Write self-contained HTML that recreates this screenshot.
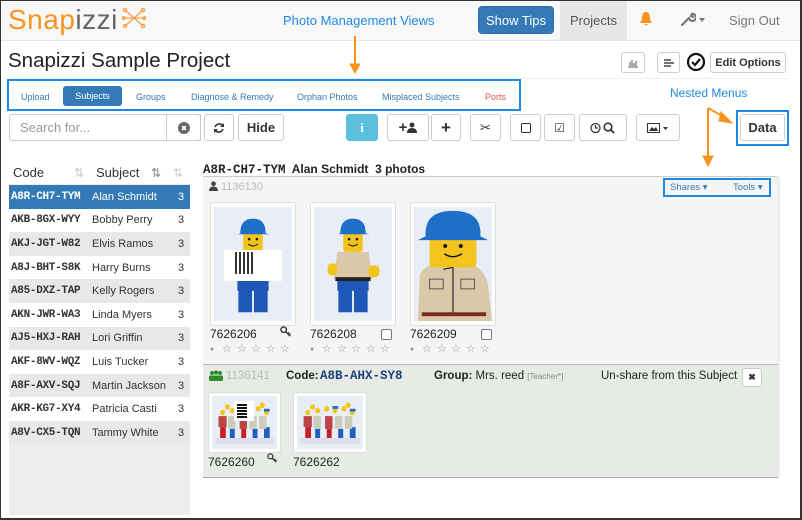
<!DOCTYPE html>
<html><head><meta charset="utf-8"><style>
*{box-sizing:border-box;margin:0;padding:0}
body{width:802px;height:520px;overflow:hidden;background:#fff;font-family:"Liberation Sans",sans-serif;position:relative;color:#333}
.a{position:absolute}
.frame{position:absolute;left:0;top:0;width:802px;height:520px;border:1px solid #333;border-right:2px solid #333;border-bottom:2px solid #333;pointer-events:none;z-index:10}
.btn{position:absolute;border:1px solid #ccc;border-radius:3px;background:#fff;display:flex;align-items:center;justify-content:center;font-size:13px;color:#333}
.mono{font-family:"Liberation Mono",monospace;font-weight:bold}
.row{position:absolute;left:9px;width:181px;height:23.6px;font-size:11px;display:flex;align-items:center}
.row .c{width:80px;padding-left:2px;font-family:"Liberation Mono",monospace;font-weight:bold;font-size:11px;letter-spacing:-0.3px}
.row .s{flex:1;padding-left:3px}
.row .n{width:12px}
.card{position:absolute;background:#fff;border:1px solid #ddd;border-radius:3px;padding:3px}
.lbl{position:absolute;font-size:12px;color:#222}
.st{position:absolute;font-size:11px;color:#999;line-height:10px}
.chk{position:absolute;width:11px;height:11px;border:1px solid #777;border-radius:2px;background:#fff}
</style></head><body>
<svg width="0" height="0" style="position:absolute">
<defs>
<symbol id="lego" viewBox="0 0 80 117">
<rect width="80" height="117" fill="#e8edf6"/>
<rect x="25" y="82" width="14" height="26" fill="#1e57b8"/><rect x="41" y="82" width="14" height="26" fill="#1e57b8"/>
<rect x="24" y="74" width="32" height="12" fill="#1e57b8"/>
<path d="M24 46 L56 46 L60 74 L20 74 Z" fill="#d9c9a9"/>
<rect x="22" y="72" width="36" height="4" fill="#222"/>
<rect x="14" y="58" width="10" height="12" rx="4" fill="#f2c41c"/><rect x="56" y="60" width="11" height="12" rx="4" fill="#f2c41c"/>
<rect x="30" y="26" width="20" height="20" rx="3" fill="#f2c41c"/>
<circle cx="36" cy="33" r="1.3" fill="#111"/><circle cx="44" cy="33" r="1.3" fill="#111"/>
<path d="M35 38 Q40 42 45 38" stroke="#111" fill="none" stroke-width="1"/>
<path d="M27 27 Q27 12 40 12 Q53 12 53 27 L57 28 L25 28 Z" fill="#1f6fc9"/>
</symbol>
<symbol id="big" viewBox="0 0 80 117">
<rect width="80" height="117" fill="#e8edf6"/>
<path d="M6 70 Q10 60 24 58 L56 58 Q72 62 76 80 L80 117 L4 117 Z" fill="#d9c9a9"/>
<rect x="8" y="108" width="66" height="4" fill="#7a2a22"/>
<rect x="16" y="26" width="48" height="36" rx="4" fill="#f2c41c"/>
<circle cx="32" cy="40" r="2" fill="#111"/><circle cx="48" cy="40" r="2" fill="#111"/>
<path d="M31 48 Q40 54 49 48" stroke="#111" fill="none" stroke-width="1.5"/>
<path d="M12 30 Q10 4 40 4 Q70 4 68 30 L76 34 L4 34 Z" fill="#1f6fc9"/>
<path d="M30 64 L40 62 M40 62 L40 108" stroke="#222" stroke-width="1.2"/>
<rect x="16" y="74" width="14" height="10" fill="none" stroke="#555"/><rect x="48" y="74" width="14" height="10" fill="none" stroke="#555"/>
</symbol>
<symbol id="grp" viewBox="0 0 80 58">
<rect width="80" height="58" fill="#e9edf4"/>
<g fill="#c8202a"><rect x="10" y="34" width="7" height="12"/><rect x="36" y="36" width="6" height="10"/></g>
<g fill="#1f5fc0"><rect x="22" y="36" width="6" height="10"/><rect x="64" y="34" width="7" height="12"/><rect x="50" y="36" width="6" height="10"/></g>
<g fill="#f2c41c"><circle cx="13" cy="18" r="3"/><circle cx="25" cy="16" r="3"/><circle cx="36" cy="14" r="3"/><circle cx="46" cy="16" r="3"/><circle cx="57" cy="14" r="3"/><circle cx="67" cy="18" r="3"/><circle cx="19" cy="12" r="3"/><circle cx="62" cy="10" r="3"/></g>
<g fill="#b44"><rect x="8" y="22" width="10" height="12"/><rect x="34" y="22" width="9" height="14"/></g>
<g fill="#ccb"><rect x="20" y="22" width="9" height="14"/><rect x="46" y="22" width="9" height="14"/><rect x="58" y="22" width="9" height="14"/></g>
<g fill="#1f6fc9"><rect x="64" y="14" width="7" height="3"/><rect x="43" y="11" width="7" height="3"/></g>
<rect x="4" y="46" width="72" height="6" fill="#dde"/>
</symbol>
<symbol id="key" viewBox="0 0 12 12"><circle cx="4" cy="4" r="3" stroke="#333" stroke-width="1.5" fill="none"/><path d="M6 6L11 11M8.5 8.5L10 7M10 10L11.5 8.5" stroke="#333" stroke-width="1.5"/></symbol>
</defs></svg>

<!-- navbar -->
<div class="a" style="left:0;top:0;width:802px;height:41px;background:#f8f8f8;border-bottom:1px solid #e7e7e7"></div>
<div class="a" style="left:8px;top:4px;font-size:28px;letter-spacing:0.5px"><span style="color:#f7931e">Snap</span><span style="color:#666">izzi</span></div>
<svg class="a" style="left:122px;top:7px" width="24" height="22" viewBox="0 0 24 22"><g stroke="#f7a24a" stroke-width="1.3" fill="none"><path d="M3 3L21 19M21 3L3 19M1 11H23"/><circle cx="3" cy="3" r="1.6"/><circle cx="21" cy="3" r="1.6"/><circle cx="3" cy="19" r="1.6"/><circle cx="21" cy="19" r="1.6"/><circle cx="1.5" cy="11" r="1.4"/><circle cx="22.5" cy="11" r="1.4"/></g></svg>
<div class="a" style="left:283px;top:13px;font-size:13px;color:#1e88e5">Photo Management Views</div>
<div class="a" style="left:478px;top:6px;width:76px;height:28px;background:#337ab7;border:1px solid #2e6da4;border-radius:4px;color:#fff;font-size:13px;display:flex;align-items:center;justify-content:center">Show Tips</div>
<div class="a" style="left:560px;top:0;width:67px;height:40px;background:#e7e7e7;color:#555;font-size:13px;display:flex;align-items:center;justify-content:center">Projects</div>
<svg class="a" style="left:639px;top:11px" width="14" height="16" viewBox="0 0 14 16"><path d="M7 1C4 1 3 4 3 7C3 10 1 11 1 12H13C13 11 11 10 11 7C11 4 10 1 7 1ZM5 13Q7 16 9 13Z" fill="#f7931e"/></svg>
<svg class="a" style="left:680px;top:12px" width="16" height="15" viewBox="0 0 16 15"><path d="M2 13L9 6M9 6A3.5 3.5 0 1 0 12 2L11 4L13 5" stroke="#777" stroke-width="2.2" fill="none" stroke-linecap="round"/></svg>
<div class="a" style="left:699px;top:18px;border:3px solid transparent;border-top:4px solid #777"></div>
<div class="a" style="left:729px;top:13px;font-size:13px;color:#777">Sign Out</div>

<!-- title -->
<div class="a" style="left:8px;top:49px;font-size:20.5px;color:#222">Snapizzi Sample Project</div>
<div class="btn" style="left:621px;top:52px;width:24px;height:21px"><svg width="12" height="10"><path d="M1 9H11M3 8V4M5 8V2M7 8V5M9 8V3" stroke="#555" stroke-width="1"/></svg></div>
<div class="btn" style="left:657px;top:52px;width:23px;height:21px"><svg width="12" height="10"><path d="M1 2H8M1 5H11M1 8H8" stroke="#444" stroke-width="1.6"/></svg></div>
<svg class="a" style="left:686px;top:52px" width="20" height="20" viewBox="0 0 20 20"><circle cx="10" cy="10" r="8" stroke="#111" stroke-width="2.2" fill="none"/><path d="M6 10L9 13L14 7" stroke="#111" stroke-width="2.2" fill="none"/></svg>
<div class="btn" style="left:710px;top:52px;width:76px;height:21px;font-size:11px;font-weight:bold">Edit Options</div>
<div class="a" style="left:8px;top:78px;width:780px;height:1px;background:#eee"></div>

<!-- tabs -->
<div class="a" style="left:7px;top:79px;width:514px;height:32px;border:2px solid #1e88e5"></div>
<div class="a" style="left:21px;top:92px;font-size:9px;color:#337ab7">Upload</div>
<div class="a" style="left:63px;top:86px;width:59px;height:20px;background:#337ab7;border-radius:3px;color:#fff;font-size:9px;display:flex;align-items:center;justify-content:center">Subjects</div>
<div class="a" style="left:136px;top:92px;font-size:9px;color:#337ab7">Groups</div>
<div class="a" style="left:191px;top:92px;font-size:9px;color:#337ab7">Diagnose &amp; Remedy</div>
<div class="a" style="left:297px;top:92px;font-size:9px;color:#337ab7">Orphan Photos</div>
<div class="a" style="left:382px;top:92px;font-size:9px;color:#337ab7">Misplaced Subjects</div>
<div class="a" style="left:485px;top:92px;font-size:9px;color:#d9534f">Ports</div>
<div class="a" style="left:670px;top:86px;font-size:12px;color:#1e88e5">Nested Menus</div>

<!-- arrows -->
<svg class="a" style="left:0;top:0" width="802" height="180"><g fill="#f7931e" stroke="#f7931e">
<path d="M355 36V66" stroke-width="2"/><path d="M350 64L355 73L360 64Z"/>
<path d="M708 108V158" stroke-width="2"/><path d="M703 156L708 166L713 156Z"/>
<path d="M708 108L726 118" stroke-width="2"/><path d="M721 112L732 123L719 121Z"/>
</g></svg>

<!-- toolbar -->
<div class="btn" style="left:9px;top:114px;width:192px;height:27px;justify-content:flex-start;padding-left:10px;color:#999;font-size:13px;border-radius:3px 0 0 3px">Search for...</div>
<div class="btn" style="left:166px;top:114px;width:35px;height:27px;border-radius:0 3px 3px 0"><svg width="12" height="12"><circle cx="6" cy="6" r="6" fill="#666"/><path d="M4 4L8 8M8 4L4 8" stroke="#fff" stroke-width="1.6"/></svg></div>
<div class="btn" style="left:204px;top:114px;width:30px;height:27px"><svg width="12" height="12" viewBox="0 0 12 12"><path d="M10 4A4.5 4.5 0 0 0 2 5M2 8A4.5 4.5 0 0 0 10 7" stroke="#333" stroke-width="1.6" fill="none"/><path d="M11 1V5H7ZM1 11V7H5Z" fill="#333"/></svg></div>
<div class="btn" style="left:238px;top:114px;width:46px;height:27px;font-weight:bold">Hide</div>
<div class="a" style="left:346px;top:114px;width:32px;height:27px;background:#5bc0de;border-radius:3px;color:#fff;font-weight:bold;font-size:13px;display:flex;align-items:center;justify-content:center;font-family:'Liberation Serif',serif">i</div>
<div class="btn" style="left:387px;top:114px;width:42px;height:27px;font-weight:bold;font-size:15px">+<svg width="10" height="11" viewBox="0 0 10 11"><circle cx="5" cy="3" r="2.5" fill="#333"/><path d="M0 11Q0 6 5 6Q10 6 10 11Z" fill="#333"/></svg></div>
<div class="btn" style="left:431px;top:114px;width:30px;height:27px;font-weight:bold;font-size:17px">+</div>
<div class="btn" style="left:470px;top:114px;width:31px;height:27px;font-size:13px">✂</div>
<div class="btn" style="left:510px;top:114px;width:31px;height:27px"><div style="width:10px;height:10px;border:1.3px solid #333;border-radius:2px"></div></div>
<div class="btn" style="left:544px;top:114px;width:31px;height:27px;font-size:12px">☑</div>
<div class="btn" style="left:579px;top:114px;width:48px;height:27px"><svg width="26" height="12" viewBox="0 0 26 12"><circle cx="5.5" cy="6" r="4.5" stroke="#333" stroke-width="1.3" fill="none"/><path d="M5.5 3V6H8" stroke="#333" stroke-width="1.2" fill="none"/><circle cx="18" cy="5" r="3.8" stroke="#333" stroke-width="1.6" fill="none"/><path d="M20.5 7.5L24 11" stroke="#333" stroke-width="1.8"/></svg></div>
<div class="btn" style="left:636px;top:114px;width:44px;height:27px"><svg width="22" height="10" viewBox="0 0 22 10"><rect x="0.5" y="0.5" width="12" height="9" fill="none" stroke="#333"/><path d="M2 8L5 4L7 6L9 4L11 8Z" fill="#333"/><path d="M16 4H21L18.5 7Z" fill="#333"/></svg></div>
<div class="a" style="left:736px;top:110px;width:53px;height:36px;border:2px solid #1e88e5"></div>
<div class="btn" style="left:740px;top:114px;width:45px;height:27px;font-weight:bold">Data</div>

<!-- left table -->
<div class="a" style="left:13px;top:165px;font-size:13px">Code</div>
<div class="a" style="left:74px;top:166px;font-size:12px;color:#ccc">⇅</div>
<div class="a" style="left:96px;top:165px;font-size:13px">Subject</div>
<div class="a" style="left:151px;top:166px;font-size:12px;color:#888">⇅</div>
<div class="a" style="left:173px;top:166px;font-size:12px;color:#ccc">⇅</div>
<div class="a" style="left:9px;top:184px;width:181px;height:331px;background:#ececec"></div>
<div class="row" style="top:185px;background:#337ab7;color:#fff"><span class="c">A8R-CH7-TYM</span><span class="s">Alan Schmidt</span><span class="n">3</span></div>
<div class="row" style="top:208.6px;background:#fff"><span class="c">AKB-8GX-WYY</span><span class="s">Bobby Perry</span><span class="n">3</span></div>
<div class="row" style="top:232.2px;background:#e8e8e8"><span class="c">AKJ-JGT-W82</span><span class="s">Elvis Ramos</span><span class="n">3</span></div>
<div class="row" style="top:255.8px;background:#fff"><span class="c">A8J-BHT-S8K</span><span class="s">Harry Burns</span><span class="n">3</span></div>
<div class="row" style="top:279.4px;background:#e8e8e8"><span class="c">A85-DXZ-TAP</span><span class="s">Kelly Rogers</span><span class="n">3</span></div>
<div class="row" style="top:303px;background:#fff"><span class="c">AKN-JWR-WA3</span><span class="s">Linda Myers</span><span class="n">3</span></div>
<div class="row" style="top:326.6px;background:#e8e8e8"><span class="c">AJ5-HXJ-RAH</span><span class="s">Lori Griffin</span><span class="n">3</span></div>
<div class="row" style="top:350.2px;background:#fff"><span class="c">AKF-8WV-WQZ</span><span class="s">Luis Tucker</span><span class="n">3</span></div>
<div class="row" style="top:373.8px;background:#e8e8e8"><span class="c">A8F-AXV-SQJ</span><span class="s">Martin Jackson</span><span class="n">3</span></div>
<div class="row" style="top:397.4px;background:#fff"><span class="c">AKR-KG7-XY4</span><span class="s">Patricia Casti</span><span class="n">3</span></div>
<div class="row" style="top:421px;background:#e8e8e8"><span class="c">A8V-CX5-TQN</span><span class="s">Tammy White</span><span class="n">3</span></div>

<!-- main panel -->
<div class="a" style="left:203px;top:162px;font-size:12px;font-weight:bold;color:#222"><span class="mono" style="font-size:12.5px">A8R-CH7-TYM</span>&nbsp; Alan Schmidt&nbsp; 3 photos</div>
<div class="a" style="left:203px;top:176px;width:575px;height:189px;background:#f5f5f5;border-top:1px solid #ccc"></div>
<div class="a" style="left:777px;top:176px;width:3px;height:302px;background:#eee"></div>
<svg class="a" style="left:209px;top:181px" width="9" height="10" viewBox="0 0 10 11"><circle cx="5" cy="3" r="2.6" fill="#444"/><path d="M0 11Q0 6 5 6Q10 6 10 11Z" fill="#444"/></svg>
<div class="a" style="left:221px;top:181px;font-size:11px;color:#bbb">1136130</div>
<div class="a" style="left:663px;top:178px;width:108px;height:19px;border:2px solid #1e88e5"></div>
<div class="a" style="left:670px;top:182px;font-size:9.5px;color:#337ab7">Shares ▾</div>
<div class="a" style="left:733px;top:182px;font-size:9.5px;color:#337ab7">Tools ▾</div>

<div class="card" style="left:210px;top:202px;width:86px;height:124px"><svg width="78" height="116"><use href="#lego"/></svg></div>
<div class="a" style="left:224px;top:250px;width:58px;height:31px;background:#fff"></div>
<div class="a" style="left:235px;top:252px;width:19px;height:22px;background:repeating-linear-gradient(90deg,#111 0 2px,#fff 2px 4px),#111;opacity:.85"></div>
<div class="card" style="left:310px;top:202px;width:86px;height:124px"><svg width="78" height="116"><use href="#lego"/></svg></div>
<div class="card" style="left:410px;top:202px;width:86px;height:124px"><svg width="78" height="116"><use href="#big"/></svg></div>

<div class="lbl" style="left:210px;top:327px">7626206</div>
<svg class="a" style="left:280px;top:326px" width="11" height="11"><use href="#key"/></svg>
<div class="lbl" style="left:310px;top:327px">7626208</div>
<div class="chk" style="left:381px;top:329px"></div>
<div class="lbl" style="left:410px;top:327px">7626209</div>
<div class="chk" style="left:481px;top:329px"></div>

<div class="st" style="left:210px;top:345px;font-size:7px">●</div><div class="st" style="left:222px;top:344px">☆</div><div class="st" style="left:237px;top:344px">☆</div><div class="st" style="left:251px;top:344px">☆</div><div class="st" style="left:266px;top:344px">☆</div><div class="st" style="left:280px;top:344px">☆</div>
<div class="st" style="left:310px;top:345px;font-size:7px">●</div><div class="st" style="left:322px;top:344px">☆</div><div class="st" style="left:337px;top:344px">☆</div><div class="st" style="left:351px;top:344px">☆</div><div class="st" style="left:366px;top:344px">☆</div><div class="st" style="left:380px;top:344px">☆</div>
<div class="st" style="left:410px;top:345px;font-size:7px">●</div><div class="st" style="left:422px;top:344px">☆</div><div class="st" style="left:437px;top:344px">☆</div><div class="st" style="left:451px;top:344px">☆</div><div class="st" style="left:466px;top:344px">☆</div><div class="st" style="left:480px;top:344px">☆</div>

<!-- group panel -->
<div class="a" style="left:203px;top:364px;width:575px;height:114px;background:#e6ebe6;border-top:1px solid #bbb;border-bottom:1px solid #aaa"></div>
<svg class="a" style="left:209px;top:370px" width="14" height="11" viewBox="0 0 14 11"><g fill="#2e8b2e"><circle cx="3" cy="3" r="2"/><circle cx="7" cy="2.5" r="2.2"/><circle cx="11" cy="3" r="2"/><rect x="0" y="5.5" width="14" height="5.5" rx="1.5"/></g></svg>
<div class="a" style="left:226px;top:370px;font-size:11.5px;color:#bbb">1136141</div>
<div class="a" style="left:286px;top:370px;font-size:11.5px;font-weight:bold;color:#222">Code:</div>
<div class="a mono" style="left:320px;top:369px;font-size:12.5px;color:#1d3f7a">A8B-AHX-SY8</div>
<div class="a" style="left:434px;top:370px;font-size:11.5px;color:#222"><b>Group:</b> Mrs. reed <span style="font-size:8px;color:#888">[Teacher*]</span></div>
<div class="a" style="left:601px;top:370px;font-size:11.5px;color:#222">Un-share from this Subject</div>
<div class="btn" style="left:742px;top:368px;width:20px;height:19px;font-size:9px;font-weight:bold">✖</div>
<div class="card" style="left:208px;top:392px;width:73px;height:61px"><svg width="65" height="53" viewBox="0 0 80 58" preserveAspectRatio="none"><use href="#grp"/></svg></div>
<div class="a" style="left:234px;top:401px;width:20px;height:20px;background:#fff"></div>
<div class="a" style="left:237px;top:403px;width:10px;height:15px;background:repeating-linear-gradient(0deg,#111 0 2px,#fff 2px 3px)"></div>
<div class="card" style="left:293px;top:392px;width:74px;height:61px"><svg width="66" height="53" viewBox="0 0 80 58" preserveAspectRatio="none"><use href="#grp"/></svg></div>
<div class="lbl" style="left:208px;top:455px">7626260</div>
<svg class="a" style="left:267px;top:453px" width="10" height="10"><use href="#key"/></svg>
<div class="lbl" style="left:293px;top:455px">7626262</div>

<div class="frame"></div>
</body></html>
